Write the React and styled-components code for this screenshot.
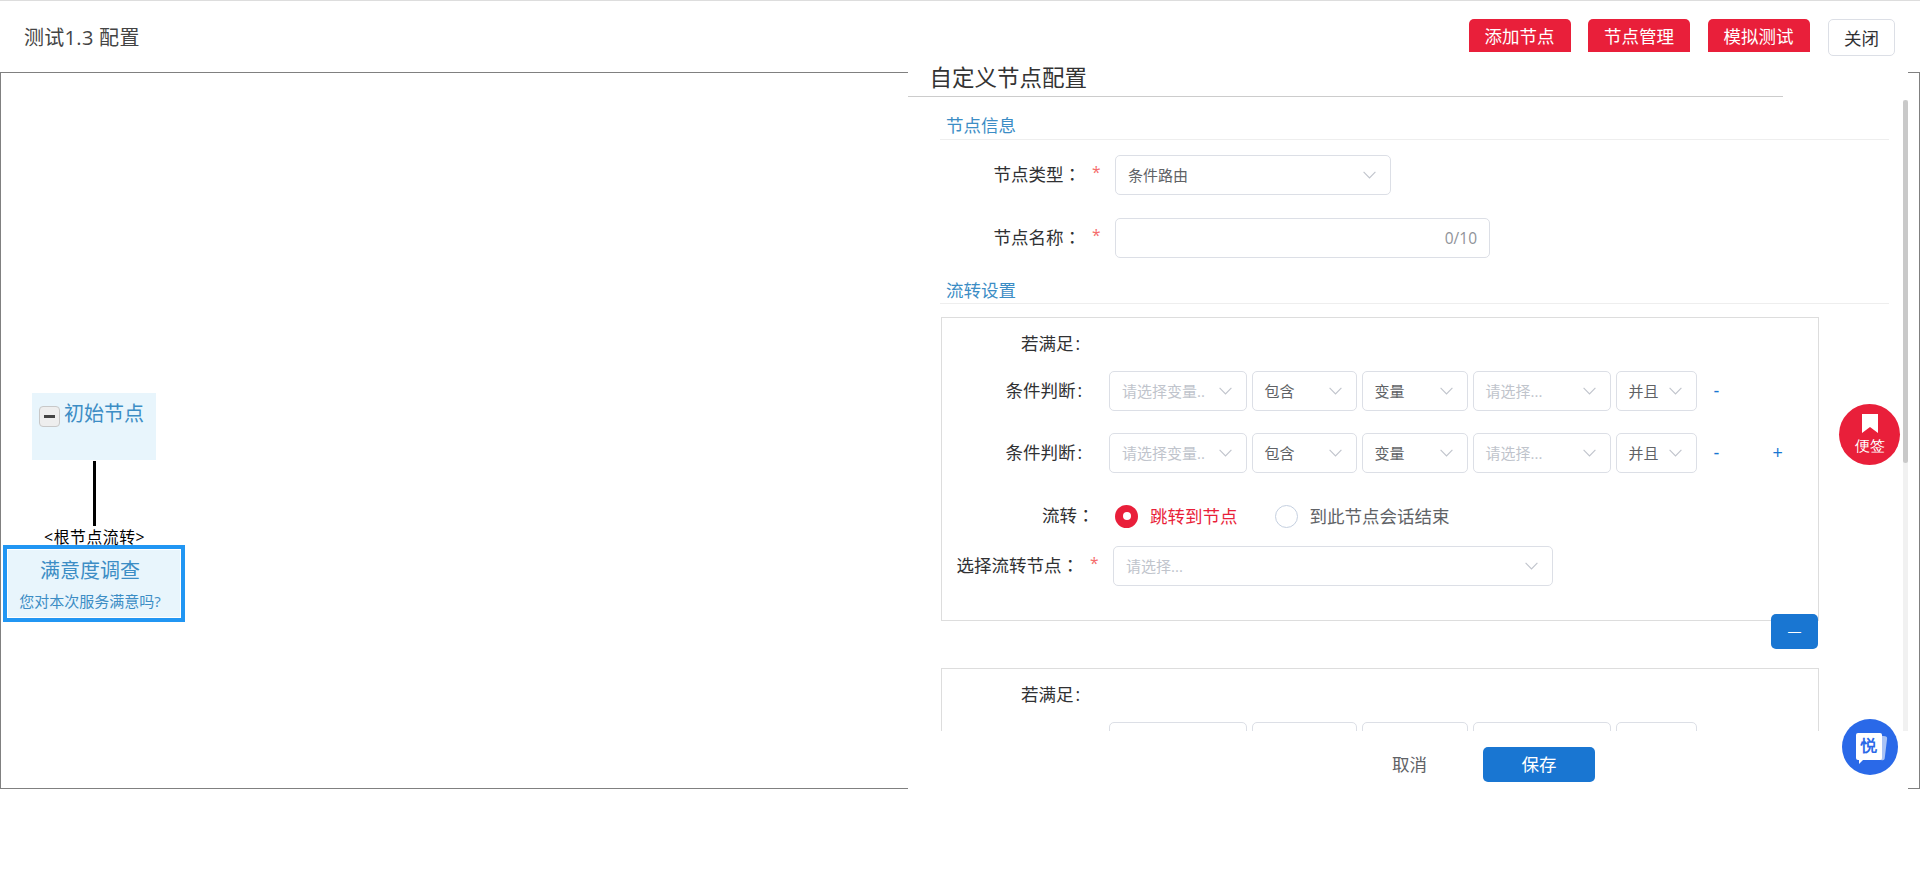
import React from "react";
import styled, { createGlobalStyle } from "styled-components";

const Global = createGlobalStyle`
  html, body { margin: 0; padding: 0; background: #fff; overflow: hidden; }
  #root { height: 895px; }
  * { box-sizing: border-box; }
  body { font-family: "Open Sans", "Noto Sans CJK SC", sans-serif; font-size: 17.5px; color: #303133; }
`;

const Page = styled.div`
  position: relative;
  width: 1920px;
  height: 895px;
  border-top: 1px solid #dddddd;
  overflow: hidden;
`;

const Header = styled.header`
  position: relative;
  z-index: 2;
  display: flex;
  align-items: flex-start;
  height: 71px;
  padding: 18px 25px 0 24px;
`;

const PageTitle = styled.h1`
  flex: 1;
  margin: 0;
  font-size: 20px;
  font-weight: 400;
  letter-spacing: 0.3px;
  line-height: 37px;
  color: #444;
`;

const Actions = styled.div`
  display: flex;
  align-items: flex-start;
  gap: 17.5px;
`;

const RedButton = styled.button`
  width: 102px;
  height: 33px;
  padding: 0 0 1px;
  border: 0;
  border-radius: 5px 5px 0 0;
  background: #e91f3a;
  color: #fff;
  font: inherit;
`;

const CloseButton = styled.button`
  width: 67px;
  height: 37px;
  margin-left: 1px;
  padding: 0 0 1px;
  border: 1px solid #dcdfe6;
  border-radius: 5px;
  background: #fff;
  color: #303133;
  font: inherit;
`;

const Canvas = styled.div`
  position: relative;
  height: 717px;
  border: 1px solid #808080;
`;

const TreeNode = styled.div`
  position: absolute;
  left: ${(p) => p.$x}px;
  top: ${(p) => p.$y}px;
  width: ${(p) => p.$w}px;
  height: ${(p) => p.$h}px;
  background: #e8f5fc;
  color: #3c8dc5;
`;

const RootNode = styled(TreeNode)`
  display: flex;
  align-items: flex-start;
  gap: 4px;
  padding: 9px 7px;
  font-size: 20px;
  line-height: 24px;
`;

const Toggle = styled.span`
  flex: none;
  display: flex;
  align-items: center;
  justify-content: center;
  width: 21px;
  height: 21px;
  margin-top: 4px;
  background: #eeeeee;
  border: 1px solid #c8c8c8;
  border-radius: 4px;
  &::before {
    content: "";
    width: 11px;
    height: 3px;
    background: #444;
  }
`;

const ChildNode = styled(TreeNode)`
  display: flex;
  flex-direction: column;
  align-items: center;
  padding: 10px 8px 0 0;
  border: 4px solid #2196f3;
  box-shadow: inset 0 0 0 1px #fff;
`;

const ChildTitle = styled.div`
  font-size: 20px;
  line-height: 24px;
`;

const ChildText = styled.div`
  margin-top: 8px;
  font-size: 15px;
  line-height: 20px;
  white-space: nowrap;
`;

const Edge = styled.div`
  position: absolute;
  left: 92px;
  top: 388px;
  width: 3px;
  height: 65px;
  background: #000;
`;

const EdgeLabel = styled.div`
  position: absolute;
  left: 43px;
  top: 453px;
  width: 101px;
  font-size: 15.8px;
  letter-spacing: 0.6px;
  line-height: 22px;
  text-align: center;
  white-space: nowrap;
  color: #000;
`;

const Panel = styled.aside`
  position: absolute;
  left: 908px;
  top: 51px;
  width: 1000px;
  height: 745px;
  background: #fff;
  display: flex;
  flex-direction: column;
`;

const PanelTitle = styled.h2`
  flex: none;
  width: 875px;
  height: 45px;
  margin: 0;
  padding: 12px 0 0 21.5px;
  border-bottom: 1px solid #cccccc;
  font-size: 22.5px;
  font-weight: 400;
  line-height: 28px;
  color: #333;
`;

const Scroller = styled.div`
  position: relative;
  flex: none;
  height: 631px;
  margin-top: 3px;
  padding: 13px 19px 0 32px;
  overflow: hidden;
`;

const Track = styled.div`
  position: absolute;
  top: 0;
  right: 0;
  width: 5px;
  height: 100%;
  background: #f1f1f1;
`;

const Thumb = styled.div`
  width: 100%;
  height: 363px;
  border-radius: 3px;
  background: #c9c9c9;
`;

const SectionHead = styled.div`
  margin-top: ${(p) => p.$mt || 0}px;
  padding: ${(p) => p.$pt || 0}px 0 ${(p) => (p.$pt ? 1 : 2)}px 6px;
  border-bottom: 1px solid #eeeeee;
  font-size: 17.5px;
  line-height: 24px;
  color: #3c8dc5;
`;

const FormRow = styled.div`
  display: flex;
  align-items: center;
  margin-top: ${(p) => p.$mt || 0}px;
`;

const Label = styled.label`
  flex: none;
  width: ${(p) => p.$w}px;
  padding: 0 1px 2px 0;
  font-size: 17.5px;
  line-height: 24px;
  text-align: right;
  color: #303133;
`;

const WideColon = styled.span`
  font-family: "Noto Sans CJK TC", sans-serif;
`;

const NarrowColon = styled.span`
  margin: 0 -1px 0 2px;
`;

const Star = styled.span`
  flex: none;
  align-self: flex-start;
  width: 33px;
  padding: 5px 0 0 10px;
  font-size: 15.5px;
  line-height: 24px;
  color: #f56c6c;
`;

const SelectBox = styled.div`
  flex: none;
  display: flex;
  align-items: center;
  justify-content: space-between;
  width: ${(p) => p.$w}px;
  height: 40px;
  padding: 0 14px 0 12px;
  border: 1px solid #dcdfe6;
  border-radius: 5px;
  background: #fff;
  font-size: 15px;
  color: ${(p) => (p.$placeholder ? "#c0c4cc" : "#606266")};
  white-space: nowrap;
`;

const SelectValue = styled.span`
  padding-bottom: 2px;
`;

const Chevron = styled.svg`
  flex: none;
  width: 13px;
  height: 8px;
  color: #c0c4cc;
`;

const Caret = () => (
  <Chevron viewBox="0 0 13 8" fill="none" stroke="currentColor" strokeWidth="1.1">
    <path d="M0.6 0.8 L6.5 7 L12.4 0.8" />
  </Chevron>
);

const Select = ({ w, children, placeholder }) => (
  <SelectBox $w={w} $placeholder={placeholder}>
    <SelectValue>{children}</SelectValue>
    <Caret />
  </SelectBox>
);

const TextBox = styled.div`
  flex: none;
  display: flex;
  align-items: center;
  justify-content: flex-end;
  width: 375px;
  height: 40px;
  padding-right: 12px;
  border: 1px solid #dcdfe6;
  border-radius: 5px;
  font-size: 15.5px;
  color: #909399;
`;

const Card = styled.section`
  width: 878px;
  margin-left: 1px;
  margin-top: ${(p) => p.$mt}px;
  height: 304px;
  padding-top: 13px;
  border: 1px solid #dddddd;
`;

const Conditions = styled.div`
  display: flex;
  flex-direction: column;
  gap: 22px;
  margin-top: 14px;
`;

const Pickers = styled.div`
  display: flex;
  gap: 5px;
  margin-left: 27px;
`;

const RowAction = styled.button`
  flex: none;
  width: 10px;
  margin-left: ${(p) => p.$ml}px;
  padding: 0;
  border: 0;
  background: none;
  font-family: "Liberation Sans", sans-serif;
  font-size: 17.5px;
  line-height: 24px;
  text-align: center;
  color: #1976d2;
`;

const Radio = styled.span`
  flex: none;
  display: flex;
  align-items: center;
  justify-content: center;
  width: 23px;
  height: 23px;
  margin-left: ${(p) => p.$ml}px;
  border-radius: 50%;
  border: ${(p) => (p.$on ? "none" : "1px solid #c5d0e0")};
  background: ${(p) => (p.$on ? "#e91f3a" : "#fff")};
  &::after {
    content: "";
    display: ${(p) => (p.$on ? "block" : "none")};
    width: 8px;
    height: 8px;
    border-radius: 50%;
    background: #fff;
  }
`;

const RadioText = styled.span`
  margin-left: 12px;
  font-size: 17.5px;
  line-height: 24px;
  color: ${(p) => (p.$on ? "#e91f3a" : "#606266")};
`;

const CardFooter = styled.div`
  display: flex;
  justify-content: flex-end;
  width: 877px;
  margin: -7px 0 19px 1px;
`;

const DashButton = styled.button`
  width: 47px;
  height: 35px;
  padding: 0;
  border: 0;
  border-radius: 5px;
  background: #1976d2;
  color: #fff;
  font-family: "Liberation Sans", sans-serif;
  font-size: 13px;
`;

const PanelFooter = styled.div`
  flex: none;
  display: flex;
  align-items: center;
  height: 35px;
  margin-top: 16px;
  padding-left: 484px;
`;

const CancelButton = styled.button`
  width: 35px;
  margin-right: 56px;
  padding: 0 0 2px;
  border: 0;
  background: none;
  font: inherit;
  color: #606266;
  white-space: nowrap;
`;

const SaveButton = styled.button`
  width: 112px;
  height: 35px;
  padding: 0 0 2px;
  border: 0;
  border-radius: 5px;
  background: #1976d2;
  color: #fff;
  font: inherit;
`;

const NoteFab = styled.button`
  position: absolute;
  left: 1839px;
  top: 403px;
  width: 61px;
  height: 61px;
  padding: 10px 0 0;
  border: 0;
  border-radius: 50%;
  background: #e91f3a;
  color: #fff;
  display: flex;
  flex-direction: column;
  align-items: center;
  gap: 3px;
  font-size: 15px;
  line-height: 20px;
`;

const BubbleFab = styled.button`
  position: absolute;
  left: 1842px;
  top: 718px;
  width: 56px;
  height: 56px;
  padding: 0;
  border: 0;
  border-radius: 50%;
  background: #2a69e8;
  display: flex;
  align-items: center;
  justify-content: center;
`;

const BubbleNote = styled.span`
  position: relative;
  z-index: 0;
  width: 26px;
  height: 27px;
  margin: -1px 0 0 -3px;
  color: #2a69e8;
  font-size: 16px;
  font-weight: 700;
  line-height: 26px;
  text-align: center;
  &::before {
    content: "";
    position: absolute;
    z-index: -2;
    left: 5px;
    top: 2px;
    width: 25px;
    height: 24px;
    border-radius: 2px;
    background: #a9c3f5;
    transform: rotate(7deg);
  }
  &::after {
    content: "";
    position: absolute;
    z-index: -1;
    left: 0;
    top: 0;
    width: 100%;
    height: 100%;
    border-radius: 2px;
    background: #fff;
  }
`;

const BubbleTail = styled.span`
  position: absolute;
  left: 3px;
  top: 26px;
  border-style: solid;
  border-width: 5px 5px 0 0;
  border-color: #fff transparent transparent transparent;
`;

const PlaceholderText = styled.span`
  color: #c0c4cc;
`;

const Bookmark = () => (
  <svg width="16" height="19" viewBox="0 0 16 19" fill="#fff">
    <path d="M0 0 H16 V19 L8 13 L0 19 Z" />
  </svg>
);

const Req = () => <Star>*</Star>;

const ConditionRow = ({ plus }) => (
  <FormRow>
    <Label $w={140}>条件判断<NarrowColon>:</NarrowColon></Label>
    <Pickers>
      <Select w={137.5}>
        <PlaceholderText>请选择变量..</PlaceholderText>
      </Select>
      <Select w={105}>包含</Select>
      <Select w={106}>变量</Select>
      <Select w={138} placeholder>请选择...</Select>
      <Select w={81}>并且</Select>
    </Pickers>
    <RowAction $ml={15}>-</RowAction>
    {plus && <RowAction $ml={51}>+</RowAction>}
  </FormRow>
);

const RuleCard = ({ mt }) => (
  <Card $mt={mt}>
    <Label as="div" $w={138}>若满足<NarrowColon>:</NarrowColon></Label>
    <Conditions>
      <ConditionRow />
      <ConditionRow plus />
    </Conditions>
    <FormRow $mt={30}>
      <Label $w={153.5}>流转<WideColon>：</WideColon></Label>
      <Radio $on $ml={19.5} />
      <RadioText $on>跳转到节点</RadioText>
      <Radio $ml={37} />
      <RadioText>到此节点会话结束</RadioText>
    </FormRow>
    <FormRow $mt={17}>
      <Label $w={138}>选择流转节点<WideColon>：</WideColon></Label>
      <Req />
      <Select w={440} placeholder>请选择...</Select>
    </FormRow>
  </Card>
);

export default function App() {
  return (
    <Page>
      <Global />
      <Header>
        <PageTitle>测试1.3 配置</PageTitle>
        <Actions>
          <RedButton>添加节点</RedButton>
          <RedButton>节点管理</RedButton>
          <RedButton>模拟测试</RedButton>
          <CloseButton>关闭</CloseButton>
        </Actions>
      </Header>
      <Canvas>
        <RootNode $x={31} $y={320} $w={124} $h={67}>
          <Toggle />
          <span>初始节点</span>
        </RootNode>
        <Edge />
        <EdgeLabel>&lt;根节点流转&gt;</EdgeLabel>
        <ChildNode $x={2} $y={472} $w={182} $h={77}>
          <ChildTitle>满意度调查</ChildTitle>
          <ChildText>您对本次服务满意吗?</ChildText>
        </ChildNode>
      </Canvas>
      <Panel>
        <PanelTitle>自定义节点配置</PanelTitle>
        <Scroller>
          <SectionHead>节点信息</SectionHead>
          <FormRow $mt={15}>
            <Label $w={142}>节点类型<WideColon>：</WideColon></Label>
            <Req />
            <Select w={276}>条件路由</Select>
          </FormRow>
          <FormRow $mt={23}>
            <Label $w={142}>节点名称<WideColon>：</WideColon></Label>
            <Req />
            <TextBox>0/10</TextBox>
          </FormRow>
          <SectionHead $mt={19} $pt={1}>流转设置</SectionHead>
          <RuleCard mt={13} />
          <CardFooter>
            <DashButton>—</DashButton>
          </CardFooter>
          <RuleCard mt={0} />
          <Track>
            <Thumb />
          </Track>
        </Scroller>
        <PanelFooter>
          <CancelButton>取消</CancelButton>
          <SaveButton>保存</SaveButton>
        </PanelFooter>
      </Panel>
      <NoteFab>
        <Bookmark />
        便签
      </NoteFab>
      <BubbleFab>
        <BubbleNote>
          悦
          <BubbleTail />
        </BubbleNote>
      </BubbleFab>
    </Page>
  );
}
